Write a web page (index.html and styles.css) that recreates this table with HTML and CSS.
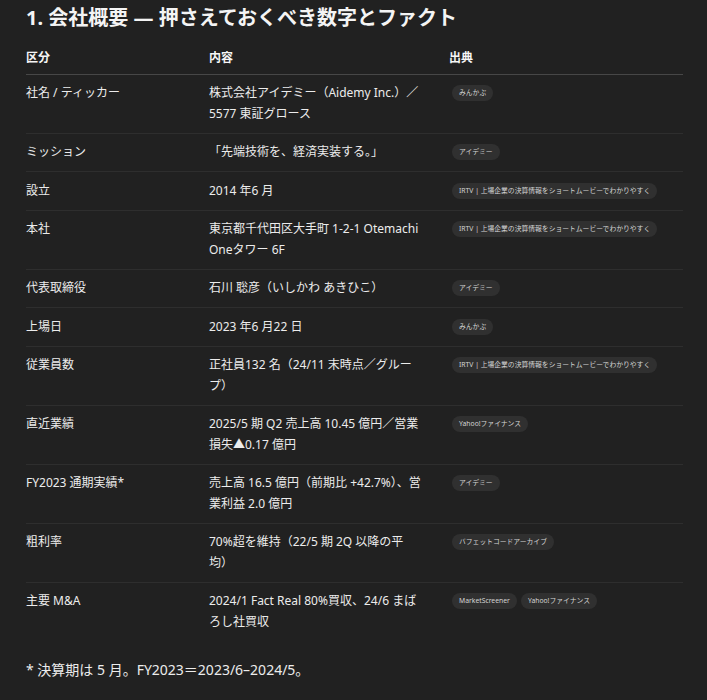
FILE: index.html
```html
<!DOCTYPE html>
<html lang="ja">
<head>
<meta charset="utf-8">
<link rel="stylesheet" href="styles.css">
</head>
<body>
<div class="page">
  <h1 class="title">1. 会社概要 — 押さえておくべき数字とファクト</h1>
  <table class="facts">
    <colgroup>
      <col class="c1"><col class="c2"><col class="c3">
    </colgroup>
    <thead>
      <tr><th>区分</th><th>内容</th><th>出典</th></tr>
    </thead>
    <tbody>
      <tr><td>社名 / ティッカー</td><td>株式会社アイデミー（Aidemy Inc.）／ 5577 東証グロース</td><td><div class="srcs"><span class="badge">みんかぶ</span></div></td></tr>
      <tr><td>ミッション</td><td>「先端技術を、経済実装する。」</td><td><div class="srcs"><span class="badge">アイデミー</span></div></td></tr>
      <tr><td>設立</td><td>2014 年6 月</td><td><div class="srcs"><span class="badge">IRTV | 上場企業の決算情報をショートムービーでわかりやすく</span></div></td></tr>
      <tr><td>本社</td><td>東京都千代田区大手町 1-2-1 Otemachi Oneタワー 6F</td><td><div class="srcs"><span class="badge">IRTV | 上場企業の決算情報をショートムービーでわかりやすく</span></div></td></tr>
      <tr><td>代表取締役</td><td>石川 聡彦（いしかわ あきひこ）</td><td><div class="srcs"><span class="badge">アイデミー</span></div></td></tr>
      <tr><td>上場日</td><td>2023 年6 月22 日</td><td><div class="srcs"><span class="badge">みんかぶ</span></div></td></tr>
      <tr><td>従業員数</td><td>正社員132 名（24/11 末時点／グループ）</td><td><div class="srcs"><span class="badge">IRTV | 上場企業の決算情報をショートムービーでわかりやすく</span></div></td></tr>
      <tr><td>直近業績</td><td>2025/5 期 Q2 売上高 10.45 億円／営業損失▲0.17 億円</td><td><div class="srcs"><span class="badge">Yahoo!ファイナンス</span></div></td></tr>
      <tr><td>FY2023 通期実績*</td><td>売上高 16.5 億円（前期比 +42.7%）、営業利益 2.0 億円</td><td><div class="srcs"><span class="badge">アイデミー</span></div></td></tr>
      <tr><td>粗利率</td><td>70%超を維持（22/5 期 2Q 以降の平<br>均）</td><td><div class="srcs"><span class="badge">バフェットコードアーカイブ</span></div></td></tr>
      <tr><td>主要 M&amp;A</td><td>2024/1 Fact Real 80%買収、24/6 まばろし社買収</td><td><div class="srcs"><span class="badge">MarketScreener</span><span class="badge">Yahoo!ファイナンス</span></div></td></tr>
    </tbody>
  </table>
  <p class="note">* 決算期は 5 月。FY2023＝2023/6–2024/5。</p>
</div>
</body>
</html>
```

FILE: styles.css
```css
html, body {
  margin: 0;
  padding: 0;
  background: #212121;
}
body {
  color: #ececec;
  font-family: "Noto Sans", "Noto Sans CJK JP", sans-serif;
}
.page {
  padding: 4px 24px 0 26px;
}
.title {
  margin: 0;
  font-size: 20px;
  line-height: 28px;
  font-weight: 700;
  color: #f4f4f4;
}
.facts {
  margin-top: 16px;
  width: 657px;
  border-collapse: collapse;
  table-layout: fixed;
  font-size: 12px;
  line-height: 20.5px;
}
.c1 { width: 183px; }
.c2 { width: 240px; }
.c3 { width: 234px; }
.facts th {
  text-align: left;
  font-weight: 700;
  color: #f6f6f6;
  padding: 0 0 5px 0;
  border-bottom: 1px solid #474747;
}
.facts th:nth-child(2), .facts td:nth-child(2) {
  padding-right: 24px;
}
.facts td {
  vertical-align: top;
  padding: 8.5px 0 8.5px 0;
  border-bottom: 1px solid #2e2e2e;
}
.facts tbody tr:last-child td {
  border-bottom: none;
}
.srcs {
  display: flex;
  gap: 4px;
  padding-left: 3px;
  padding-top: 2px;
}
.badge {
  display: inline-block;
  height: 16px;
  line-height: 16px;
  padding: 0 7px;
  border-radius: 8px;
  background: #303030;
  color: #d4d4d4;
  font-size: 6.8px;
  white-space: nowrap;
}
.note {
  margin: 18px 0 0 0;
  font-size: 14px;
  line-height: 22px;
  color: #ececec;
}
```
